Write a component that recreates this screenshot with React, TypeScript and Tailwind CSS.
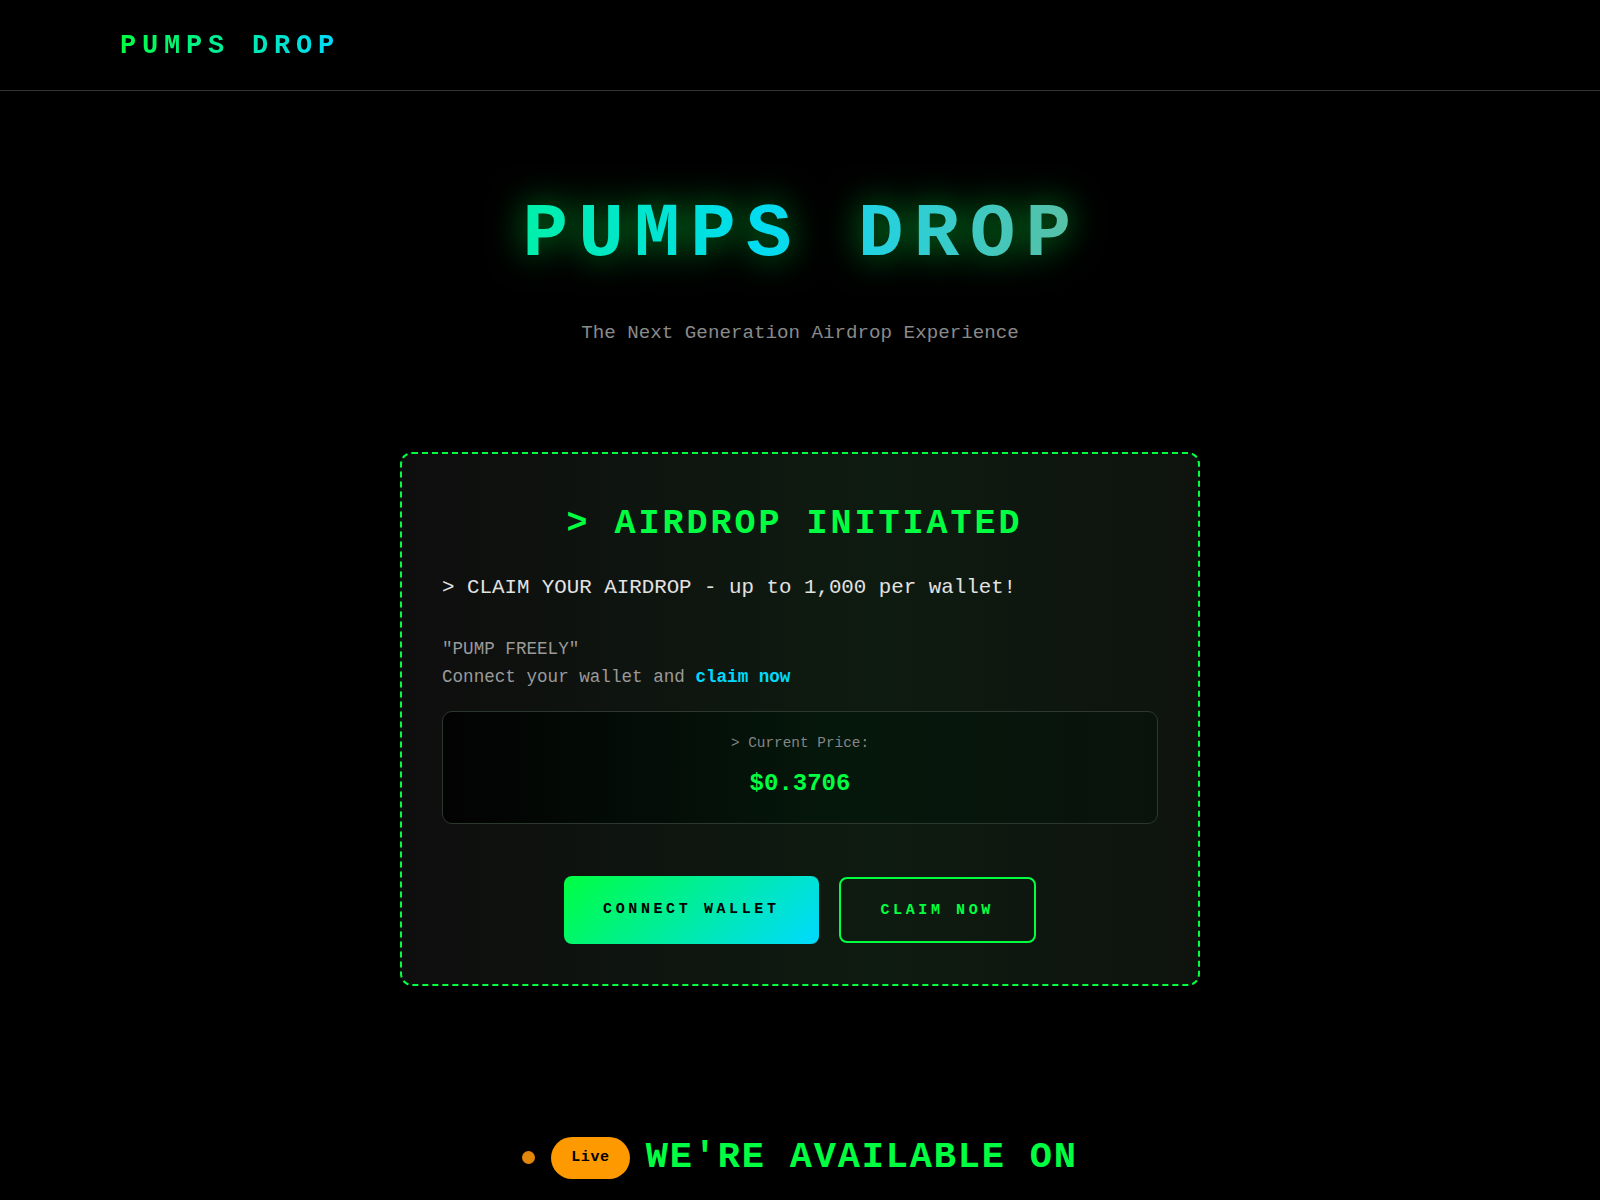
import React from "react";

const mono = "font-['Courier_New','Liberation_Mono',monospace]";

function Header() {
  return (
    <header className="h-[91px] border-b border-[#333]">
      <div className="max-w-[1400px] mx-auto px-5 h-full flex items-center">
        <span
          className={`${mono} mt-[2px] text-[27px] leading-none font-bold tracking-[5.8px] bg-[linear-gradient(90deg,#00ff41_0%,#00d9ff_100%)] bg-clip-text text-transparent`}
        >
          PUMPS DROP
        </span>
      </div>
    </header>
  );
}

function Hero() {
  return (
    <section className="flex flex-col items-center pt-[106px]">
      <h1
        className={`${mono} pl-[4px] text-[76px] leading-none font-bold tracking-[10.3px] bg-[linear-gradient(90deg,#00f0a8_0%,#00dcf0_42%,#22d2e2_62%,#5ac0a2_100%)] bg-clip-text text-transparent drop-shadow-[0_0_18px_rgba(0,255,65,0.6)]`}
      >
        PUMPS DROP
      </h1>
      <p className={`${mono} mt-[46px] text-[19.2px] leading-[28.8px] text-[#8a8a8a]`}>
        The Next Generation Airdrop Experience
      </p>
    </section>
  );
}

function PriceBox() {
  return (
    <div className="mt-5 rounded-[10px] border border-[#2c372e] bg-[linear-gradient(90deg,#020202_0%,#05170b_55%,#09130b_100%)] pt-[21px] pb-[23px] flex flex-col items-center">
      <div className={`${mono} text-[14.4px] leading-5 text-[#858585]`}>&gt; Current Price:</div>
      <div className="mt-[15px] font-['Liberation_Mono',monospace] text-[24px] leading-8 font-bold text-[#00ff41]">
        $0.3706
      </div>
    </div>
  );
}

function AirdropCard() {
  return (
    <div className="mt-[104px] mx-auto w-[800px] rounded-xl border-2 border-dashed border-[#00ff41] bg-[linear-gradient(90deg,#0e0e0e_0%,#0e1b10_60%,#0e130e_100%)] pt-[52px] px-10 pb-10">
      <h2 className={`${mono} text-center text-[35px] leading-[36px] font-bold tracking-[3px] text-[#00ff41]`}>
        &gt; AIRDROP INITIATED<span className="inline-block w-[11px]" />
      </h2>
      <p className={`${mono} mt-[31px] text-[20.8px] leading-[30px] text-[#e2e2e2]`}>
        &gt; CLAIM YOUR AIRDROP - up to 1,000 per wallet!
      </p>
      <div className={`${mono} mt-8 text-[17.6px] leading-[28px] text-[#9a9a9a]`}>
        <div>"PUMP FREELY"</div>
        <div>
          Connect your wallet and <span className="font-bold text-[#00d9ff]">claim now</span>
        </div>
      </div>
      <PriceBox />
      <div className="mt-[52px] flex justify-center items-center gap-5">
        <button
          className={`${mono} h-[68px] px-[39px] rounded-lg bg-[linear-gradient(135deg,#00ff41_0%,#00d9ff_100%)] text-black font-bold text-[15px] leading-5 tracking-[3.6px]`}
        >
          CONNECT WALLET
        </button>
        <button
          className={`${mono} h-[66px] px-10 rounded-lg border-2 border-[#00ff41] bg-transparent text-[#00ff41] font-bold text-[15px] leading-5 tracking-[3.6px] pt-[3px]`}
        >
          CLAIM NOW
        </button>
      </div>
    </div>
  );
}

function Availability() {
  return (
    <section className="mt-[151px] flex items-center justify-center gap-4 pb-16">
      <span className="w-[13px] h-[13px] rounded-full bg-[#e3870a]" />
      <span className={`${mono} h-[42px] px-5 rounded-full bg-[#ff9900] flex items-center text-[15px] font-bold text-black tracking-[0.6px]`}>
        Live
      </span>
      <h3 className={`${mono} text-[37px] leading-none font-bold tracking-[1.8px] text-[#00ff41]`}>WE'RE AVAILABLE ON</h3>
    </section>
  );
}

export default function App() {
  return (
    <div className="min-h-screen bg-black">
      <Header />
      <Hero />
      <AirdropCard />
      <Availability />
    </div>
  );
}
